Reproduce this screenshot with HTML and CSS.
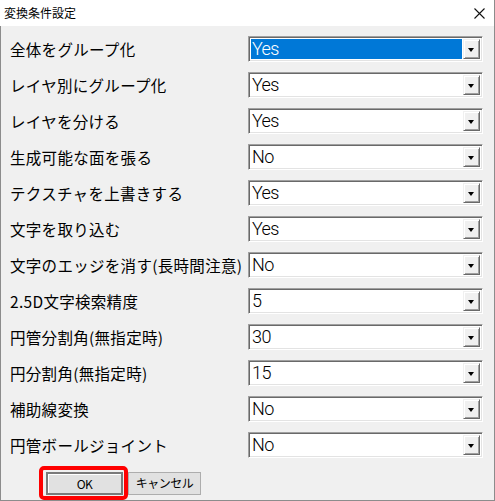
FILE: index.html
```html
<!DOCTYPE html>
<html lang="ja">
<head>
<meta charset="utf-8">
<title>変換条件設定</title>
<link rel="stylesheet" href="styles.css">
</head>
<body>
<div class="window">
  <div class="titlebar">
    <span class="title">変換条件設定</span>
    <svg class="close" width="11" height="11" viewBox="0 0 11 11"><path d="M0.5 0.5 L10.5 10.5 M10.5 0.5 L0.5 10.5" stroke="#111" stroke-width="1.1" fill="none"/></svg>
  </div>
  <div class="body">
    <div class="row"><span class="label">全体をグループ化</span><div class="combo"><span class="value selected">Yes</span><span class="drop"></span></div></div>
    <div class="row"><span class="label">レイヤ別にグループ化</span><div class="combo"><span class="value">Yes</span><span class="drop"></span></div></div>
    <div class="row"><span class="label">レイヤを分ける</span><div class="combo"><span class="value">Yes</span><span class="drop"></span></div></div>
    <div class="row"><span class="label">生成可能な面を張る</span><div class="combo"><span class="value">No</span><span class="drop"></span></div></div>
    <div class="row"><span class="label">テクスチャを上書きする</span><div class="combo"><span class="value">Yes</span><span class="drop"></span></div></div>
    <div class="row"><span class="label">文字を取り込む</span><div class="combo"><span class="value">Yes</span><span class="drop"></span></div></div>
    <div class="row"><span class="label">文字のエッジを消す(長時間注意)</span><div class="combo"><span class="value">No</span><span class="drop"></span></div></div>
    <div class="row"><span class="label">2.5D文字検索精度</span><div class="combo"><span class="value">5</span><span class="drop"></span></div></div>
    <div class="row"><span class="label">円管分割角(無指定時)</span><div class="combo"><span class="value">30</span><span class="drop"></span></div></div>
    <div class="row"><span class="label">円分割角(無指定時)</span><div class="combo"><span class="value">15</span><span class="drop"></span></div></div>
    <div class="row"><span class="label">補助線変換</span><div class="combo"><span class="value">No</span><span class="drop"></span></div></div>
    <div class="row"><span class="label">円管ボールジョイント</span><div class="combo"><span class="value">No</span><span class="drop"></span></div></div>
    <div class="buttons">
      <div class="highlight"><button class="btn default">OK</button></div>
      <button class="btn">キャンセル</button>
    </div>
  </div>
</div>
</body>
</html>
```

FILE: styles.css
```css
html, body {
  margin: 0;
  padding: 0;
  background: #f0f0f0;
}
.window {
  width: 495px;
  height: 501px;
  box-sizing: border-box;
  border-right: 1px solid #8c8c8c;
  border-bottom: 1px solid #8c8c8c;
  background: #f0f0f0;
  display: flex;
  flex-direction: column;
  font-family: "Noto Sans CJK JP", "Noto Sans", sans-serif;
}
.titlebar {
  height: 26px;
  background: #ffffff;
  display: flex;
  align-items: center;
  justify-content: space-between;
  padding: 0 9px 0 4px;
  flex: none;
}
.title {
  font-size: 12px;
  color: #000;
  line-height: 1;
}
.close {
  display: block;
  margin-top: 1px;
}
.body {
  flex: 1;
  border-left: 1px solid #8c8c8c;
  padding: 10px 11px 0 9px;
  display: flex;
  flex-direction: column;
  gap: 10px;
}
.row {
  display: flex;
  align-items: center;
  justify-content: space-between;
  height: 26px;
}
.label {
  font-size: 15.5px;
  color: #000;
  white-space: nowrap;
  line-height: 1;
  letter-spacing: 0.3px;
  margin-top: 1px;
}
.combo {
  width: 235px;
  height: 26px;
  box-sizing: border-box;
  border-top: 1px solid #a0a0a0;
  border-left: 1px solid #a0a0a0;
  border-right: 1px solid #ffffff;
  border-bottom: 1px solid #ffffff;
  box-shadow: inset 1px 1px 0 #696969, inset -1px -1px 0 #e3e3e3;
  background: #ffffff;
  display: flex;
  align-items: stretch;
  padding: 2px;
  flex: none;
}
.value {
  flex: 1;
  font-family: Roboto, "Liberation Sans", sans-serif;
  font-weight: 300;
  font-size: 18px;
  letter-spacing: -0.6px;
  color: #000;
  display: flex;
  align-items: center;
  padding-left: 1px;
  line-height: 1;
}
.value.selected {
  background: #0078d7;
  color: #ffffff;
  margin-right: 1px;
}
.drop {
  width: 17px;
  min-width: 17px;
  box-sizing: border-box;
  background: #f0f0f0;
  border-top: 1px solid #f0f0f0;
  border-left: 1px solid #f0f0f0;
  border-right: 1px solid #696969;
  border-bottom: 1px solid #696969;
  box-shadow: inset 1px 1px 0 #ffffff, inset -1px -1px 0 #a0a0a0;
  position: relative;
  flex: none;
}
.drop::after {
  content: "";
  position: absolute;
  left: 4px;
  top: 8px;
  border-left: 3.5px solid transparent;
  border-right: 3.5px solid transparent;
  border-top: 4px solid #000;
}
.buttons {
  display: flex;
  align-items: center;
  margin-top: -2px;
  padding-left: 29px;
}
.highlight {
  border: 4px solid #ff0000;
  border-radius: 5px;
  padding: 2px 1px 1px 3px;
  display: flex;
}
.btn {
  width: 73px;
  height: 23px;
  box-sizing: border-box;
  background: #e1e1e1;
  border: 1px solid #adadad;
  font-family: "Noto Sans CJK JP", "Noto Sans", sans-serif;
  font-size: 12px;
  letter-spacing: -0.5px;
  color: #000;
  padding: 0;
  margin: 0;
  line-height: 1;
}
.btn.default {
  width: 77px;
  border: 2px solid #7a7a7a;
  box-shadow: inset 1px 1px 0 #ffffff;
}
```
